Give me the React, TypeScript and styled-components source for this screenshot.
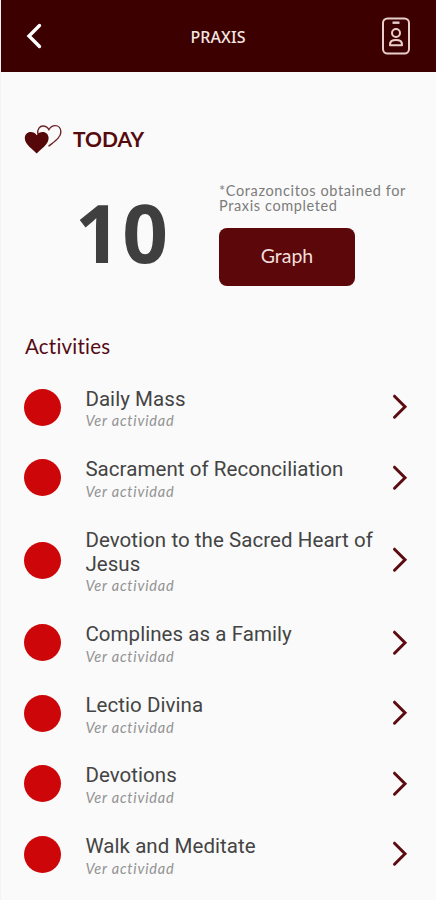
import React from 'react';
import styled, { createGlobalStyle } from 'styled-components';

const GlobalStyle = createGlobalStyle`
	* {
		box-sizing: border-box;
	}

	body {
		margin: 0;
		background-color: #fafafa;
	}

	button {
		padding: 0;
		border: none;
		background: none;
		cursor: pointer;
	}

	h1, h2, p, ul {
		margin: 0;
		padding: 0;
	}

	svg {
		flex: none;
	}
`;

const Screen = styled.div`
	display: flex;
	flex-direction: column;
	width: 100%;
	height: 900px;
	overflow: hidden;
	background-color: #fafafa;
	border-left: 1px solid #f3f3f3;
	font-family: Lato, sans-serif;
`;

const Header = styled.header`
	display: grid;
	grid-template-columns: 60px 1fr 60px;
	align-items: center;
	flex: none;
	height: 72px;
	margin-left: -1px;
	padding: 0 9px;
	background-color: #3d0000;
`;

const HeaderTitle = styled.h1`
	padding-top: 1px;
	color: #f3e6e2;
	font-family: 'Noto Sans', sans-serif;
	font-size: 16px;
	font-weight: 500;
	letter-spacing: 0.1px;
	text-align: center;
`;

const HeaderButton = styled.button<{ $align: string }>`
	display: flex;
	justify-content: ${({ $align }) => $align};
	align-items: center;
	height: 72px;
	padding: 0 16px;
`;

const Summary = styled.section`
	flex: none;
	height: 256px;
	padding: 50px 24px 0 23px;
`;

const TodayHeading = styled.div`
	display: flex;
	align-items: center;
	gap: 10px;
	height: 34px;
`;

const TodayText = styled.h2`
	color: #560a0e;
	font-size: 21px;
	font-weight: 700;
	line-height: 34px;
`;

const SummaryBody = styled.div`
	display: grid;
	grid-template-columns: 195px 1fr;
	padding-top: 27px;
`;

const Count = styled.p`
	padding-left: 51px;
	color: #3f3f3f;
	font-family: 'Open Sans', sans-serif;
	font-size: 80px;
	font-weight: 700;
	line-height: 97px;
	letter-spacing: 1.5px;
`;

const Note = styled.p`
	color: #7c7c7c;
	font-size: 14.5px;
	line-height: 15px;
	letter-spacing: 0.62px;
	white-space: nowrap;
`;

const GraphButton = styled.button`
	width: 136px;
	height: 58px;
	margin-top: 15px;
	padding-bottom: 3px;
	background-color: #5c080a;
	border-radius: 8px;
	color: #f1dfdc;
	font-family: Lato, sans-serif;
	font-size: 19.5px;
`;

const SectionTitle = styled.h2`
	flex: none;
	height: 44px;
	padding-left: 24px;
	color: #560a14;
	font-size: 20.5px;
	font-weight: 400;
	line-height: 37px;
	letter-spacing: 0.22px;
`;

const ActivityList = styled.ul`
	list-style: none;
`;

const ActivityItem = styled.li`
	display: grid;
	grid-template-columns: 37px 290px 16px;
	column-gap: 24px;
	align-items: center;
	padding: 13.6px 0 14px 23.4px;
`;

const StatusDot = styled.span`
	width: 37px;
	height: 37px;
	border-radius: 50%;
	background-color: #cd0709;
`;

const ActivityText = styled.div`
	padding-top: 2px;
	margin-bottom: -2px;
`;

const ActivityName = styled.p`
	color: #444;
	font-family: Roboto, sans-serif;
	font-size: 20.5px;
	line-height: 23.8px;
	letter-spacing: 0.06px;
`;

const ActivityLink = styled.p`
	color: #929292;
	font-size: 14.5px;
	font-style: italic;
	line-height: 19.2px;
	letter-spacing: 0.8px;
`;

const Chevron = styled.svg`
	display: block;
	margin-left: -7.5px;
`;

const activities = [
	'Daily Mass',
	'Sacrament of Reconciliation',
	'Devotion to the Sacred Heart of Jesus',
	'Complines as a Family',
	'Lectio Divina',
	'Devotions',
	'Walk and Meditate',
];

function BackIcon() {
	return (
		<svg width="18" height="26" viewBox="0 0 18 26" fill="none">
			<path
				d="M14.5 2.5L4 13L14.5 23.5"
				stroke="#fff"
				strokeWidth="3.4"
				strokeLinecap="round"
			/>
		</svg>
	);
}

function BadgeIcon() {
	return (
		<svg width="30" height="38" viewBox="0 0 30 38" fill="none" stroke="#e8cfcb">
			<rect x="2" y="1.5" width="26" height="35" rx="4.5" strokeWidth="2" />
			<path d="M11.5 5.7H18.5" strokeWidth="2.4" />
			<circle cx="15" cy="16" r="4" strokeWidth="2" />
			<path
				d="M9 28.3V27.3C9 24.3 11.5 22.9 15 22.9S21 24.3 21 27.3V28.3Z"
				strokeWidth="2"
				strokeLinejoin="round"
			/>
		</svg>
	);
}

function HeartsIcon() {
	return (
		<svg width="39" height="30" viewBox="0 0 39 30">
			<path
				d="M13.8 10C13.2 5 15.8 2 19 2C21.6 2 23.6 3.4 24.9 5.6C26.4 3 28.6 1.6 31.2 1.6C34.6 1.6 36.9 4.2 36.9 8C36.9 13.6 30.5 17.5 24.5 22.3"
				fill="none"
				stroke="#6b2429"
				strokeWidth="1.4"
			/>
			<path
				d="M12.7 29.5C9 25.3 0.8 20.6 0.8 14.2C0.8 10.4 3.4 8 6.7 8C9.2 8 11.4 9.2 12.7 11.2C14 9.2 16.2 8 18.7 8C22 8 24.6 10.4 24.6 14.2C24.6 20.6 16.4 25.3 12.7 29.5Z"
				fill="#560709"
			/>
		</svg>
	);
}

function ChevronIcon() {
	return (
		<Chevron width="16" height="26" viewBox="0 0 16 26" fill="none">
			<path
				d="M2.5 2.2L13 12.7L2.5 23.2"
				stroke="#5c0c10"
				strokeWidth="3"
				strokeLinecap="round"
			/>
		</Chevron>
	);
}

function App(): JSX.Element {
	return (
		<>
			<GlobalStyle />
			<Screen>
				<Header>
					<HeaderButton $align="flex-start" aria-label="Back">
						<BackIcon />
					</HeaderButton>
					<HeaderTitle>PRAXIS</HeaderTitle>
					<HeaderButton $align="flex-end" aria-label="Profile">
						<BadgeIcon />
					</HeaderButton>
				</Header>
				<Summary>
					<TodayHeading>
						<HeartsIcon />
						<TodayText>TODAY</TodayText>
					</TodayHeading>
					<SummaryBody>
						<Count>10</Count>
						<div>
							<Note>
								*Corazoncitos obtained for
								<br />
								Praxis completed
							</Note>
							<GraphButton>Graph</GraphButton>
						</div>
					</SummaryBody>
				</Summary>
				<SectionTitle>Activities</SectionTitle>
				<ActivityList>
					{activities.map(name => (
						<ActivityItem key={name}>
							<StatusDot />
							<ActivityText>
								<ActivityName>{name}</ActivityName>
								<ActivityLink>Ver actividad</ActivityLink>
							</ActivityText>
							<ChevronIcon />
						</ActivityItem>
					))}
				</ActivityList>
			</Screen>
		</>
	);
}

export default App;
